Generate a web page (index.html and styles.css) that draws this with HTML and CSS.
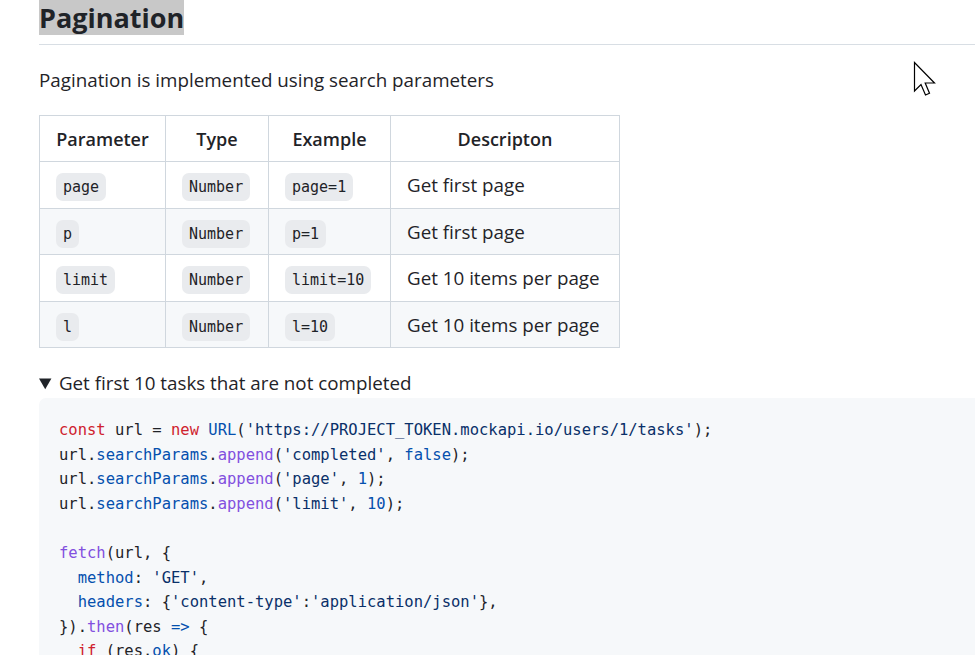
FILE: index.html
```html
<!DOCTYPE html>
<html lang="en">
<head>
<meta charset="utf-8">
<title>Pagination</title>
<link rel="stylesheet" href="styles.css">
</head>
<body>
<main class="doc">
  <h2 class="doc-h2"><span class="hl">Pagination</span></h2>
  <p class="doc-p">Pagination is implemented using search parameters</p>
  <table class="doc-table">
    <colgroup>
      <col class="c1"><col class="c2"><col class="c3"><col class="c4">
    </colgroup>
    <thead>
      <tr><th>Parameter</th><th>Type</th><th>Example</th><th>Descripton</th></tr>
    </thead>
    <tbody>
      <tr><td><code>page</code></td><td><code>Number</code></td><td><code>page=1</code></td><td>Get first page</td></tr>
      <tr><td><code>p</code></td><td><code>Number</code></td><td><code>p=1</code></td><td>Get first page</td></tr>
      <tr><td><code>limit</code></td><td><code>Number</code></td><td><code>limit=10</code></td><td>Get 10 items per page</td></tr>
      <tr><td><code>l</code></td><td><code>Number</code></td><td><code>l=10</code></td><td>Get 10 items per page</td></tr>
    </tbody>
  </table>
  <details class="doc-details" open>
    <summary>Get first 10 tasks that are not completed</summary>
<pre class="code"><span class="k">const</span> url = <span class="k">new</span> <span class="c">URL</span>(<span class="s">'https://PROJECT_TOKEN.mockapi.io/users/1/tasks'</span>);
url.<span class="c">searchParams</span>.<span class="f">append</span>(<span class="s">'completed'</span>, <span class="c">false</span>);
url.<span class="c">searchParams</span>.<span class="f">append</span>(<span class="s">'page'</span>, <span class="c">1</span>);
url.<span class="c">searchParams</span>.<span class="f">append</span>(<span class="s">'limit'</span>, <span class="c">10</span>);

<span class="f">fetch</span>(url, {
  <span class="c">method</span>: <span class="s">'GET'</span>,
  <span class="c">headers</span>: {<span class="s">'content-type'</span>:<span class="s">'application/json'</span>},
}).<span class="f">then</span>(res <span class="c">=&gt;</span> {
  <span class="k">if</span> (res.<span class="c">ok</span>) {
      <span class="k">return</span> res.<span class="f">json</span>();
  }
  <span class="c">// handle error</span>
});</pre>
  </details>
</main>
<svg class="cursor" width="26" height="40" viewBox="0 0 26 40" aria-hidden="true">
  <path d="M1.5 1.5 L1.5 30 L8 23.5 L12.5 34 L16.5 32.3 L12.2 22 L21.5 22 Z" fill="#fff" stroke="#000" stroke-width="1.2" stroke-linejoin="miter"/>
</svg>
</body>
</html>
```
FILE: styles.css
```css
html {
  overflow: hidden;
}
body {
  margin: 0;
  background: #ffffff;
  color: #1f2328;
  font-family: "Open Sans", "Noto Sans", sans-serif;
  font-size: 18.8px;
  line-height: 1.5;
}
.doc {
  width: 1000px;
  padding: 0 0 0 39px;
}
.doc-h2 {
  margin: 0 0 20px;
  padding-bottom: 9px;
  font-size: 27px;
  line-height: 35px;
  font-weight: 700;
  border-bottom: 1px solid #d8dee4;
}
.hl {
  background: #c8c8c8;
  display: inline-block;
  height: 35px;
}
.doc-p {
  margin: 0 0 20px;
  line-height: 30px;
}
.doc-table {
  border-collapse: collapse;
  border-spacing: 0;
  margin: 0 0 20px;
  table-layout: fixed;
  width: 580px;
}
.c1 { width: 126px; }
.c2 { width: 103px; }
.c3 { width: 122px; }
.c4 { width: 229px; }
.doc-table th,
.doc-table td {
  border: 1px solid #d0d7de;
  padding: 7.5px 16px;
  height: 30px;
  line-height: 30px;
  white-space: nowrap;
}
.doc-table td {
  padding-top: 8px;
  padding-bottom: 7.5px;
}
.doc-table th {
  font-weight: 600;
  font-size: 18px;
  text-align: center;
  padding-left: 8px;
  padding-right: 8px;
}
.doc-table td {
  text-align: left;
}
.doc-table tbody tr:nth-child(2n+1) {
  background: #ffffff;
}
.doc-table tbody tr:nth-child(2n) {
  background: #f6f8fa;
}
.doc-table code {
  font-family: "DejaVu Sans Mono", monospace;
  font-size: 15px;
  line-height: 1;
  background: #e9ebee;
  border-radius: 7px;
  padding: 5px 7px;
}
.doc-details summary {
  line-height: 30px;
  cursor: pointer;
}
.code {
  margin: 0;
  background: #f6f8fa;
  border-radius: 7px;
  padding: 20px;
  font-family: "DejaVu Sans Mono", monospace;
  font-size: 15.5px;
  line-height: 24.6px;
  color: #1f2328;
}
.k { color: #cf222e; }
.s { color: #0a3069; }
.c { color: #0550ae; }
.f { color: #8250df; }
.cursor {
  position: absolute;
  left: 913px;
  top: 61px;
}
```
